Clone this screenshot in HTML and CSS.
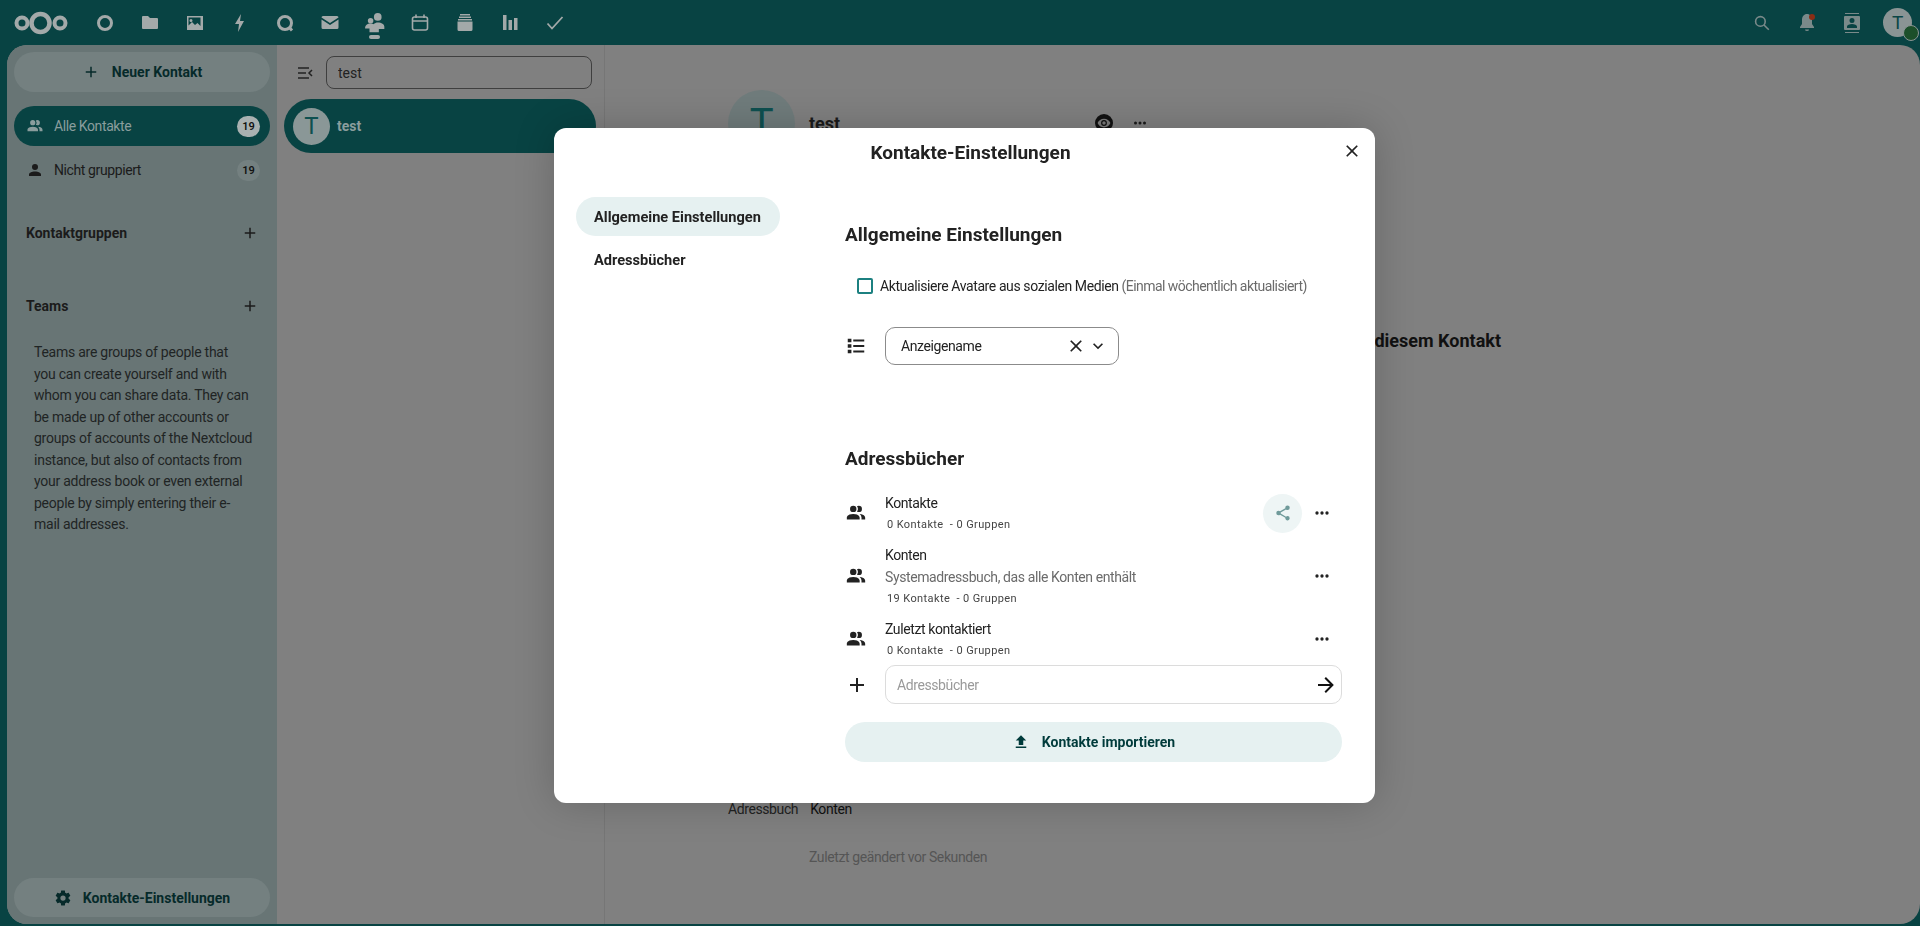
FILE: index.html
```html
<!DOCTYPE html>
<html lang="de">
<head>
  <meta charset="UTF-8">
  <meta name="viewport" content="width=device-width, initial-scale=1.0">
  <title>Kontakte</title>
  <link rel="stylesheet" href="styles.css">
</head>
<body>

<svg class="sprite" width="0" height="0">
  <symbol id="i-group" viewBox="0 0 24 24"><path d="M16 17V19H2V17S2 13 9 13 16 17 16 17M12.5 7.5A3.5 3.5 0 1 0 9 11A3.5 3.5 0 0 0 12.5 7.5M15.94 13A5.32 5.32 0 0 1 18 17V19H22V17S22 13.37 15.94 13M15 4A3.39 3.39 0 0 0 13.07 4.59A5 5 0 0 1 13.07 10.41A3.39 3.39 0 0 0 15 11A3.5 3.5 0 0 0 15 4Z"/></symbol>
  <symbol id="i-account" viewBox="0 0 24 24"><path d="M12,4A4,4 0 0,1 16,8A4,4 0 0,1 12,12A4,4 0 0,1 8,8A4,4 0 0,1 12,4M12,14C16.42,14 20,15.79 20,18V20H4V18C4,15.79 7.58,14 12,14Z"/></symbol>
  <symbol id="i-plus" viewBox="0 0 24 24"><path d="M19,13H13V19H11V13H5V11H11V5H13V11H19V13Z"/></symbol>
  <symbol id="i-close" viewBox="0 0 24 24"><path d="M19,6.41L17.59,5L12,10.59L6.41,5L5,6.41L10.59,12L5,17.59L6.41,19L12,13.41L17.59,19L19,17.59L13.41,12L19,6.41Z"/></symbol>
  <symbol id="i-chevron" viewBox="0 0 24 24"><path d="M7.41,8.58L12,13.17L16.59,8.58L18,10L12,16L6,10L7.41,8.58Z"/></symbol>
  <symbol id="i-arrow" viewBox="0 0 24 24"><path d="M4,11V13H16L10.5,18.5L11.92,19.92L19.84,12L11.92,4.08L10.5,5.5L16,11H4Z"/></symbol>
  <symbol id="i-share" viewBox="0 0 24 24"><path d="M18,16.08C17.24,16.08 16.56,16.38 16.04,16.85L8.91,12.7C8.96,12.47 9,12.24 9,12C9,11.76 8.96,11.53 8.91,11.3L15.96,7.19C16.5,7.69 17.21,8 18,8A3,3 0 0,0 21,5A3,3 0 0,0 18,2A3,3 0 0,0 15,5C15,5.24 15.04,5.47 15.09,5.7L8.04,9.81C7.5,9.31 6.79,9 6,9A3,3 0 0,0 3,12A3,3 0 0,0 6,15C6.79,15 7.5,14.69 8.04,14.19L15.16,18.34C15.11,18.55 15.08,18.77 15.08,19C15.08,20.61 16.39,21.91 18,21.91C19.61,21.91 20.92,20.61 20.92,19A2.92,2.92 0 0,0 18,16.08Z"/></symbol>
  <symbol id="i-dots" viewBox="0 0 24 24"><path d="M16,12A2,2 0 0,1 18,10A2,2 0 0,1 20,12A2,2 0 0,1 18,14A2,2 0 0,1 16,12M10,12A2,2 0 0,1 12,10A2,2 0 0,1 14,12A2,2 0 0,1 12,14A2,2 0 0,1 10,12M4,12A2,2 0 0,1 6,10A2,2 0 0,1 8,12A2,2 0 0,1 6,14A2,2 0 0,1 4,12Z"/></symbol>
  <symbol id="i-cog" viewBox="0 0 24 24"><path d="M12,15.5A3.5,3.5 0 0,1 8.5,12A3.5,3.5 0 0,1 12,8.5A3.5,3.5 0 0,1 15.5,12A3.5,3.5 0 0,1 12,15.5M19.43,12.97C19.47,12.65 19.5,12.33 19.5,12C19.5,11.67 19.47,11.34 19.43,11L21.54,9.37C21.73,9.22 21.78,8.95 21.66,8.73L19.66,5.27C19.54,5.05 19.27,4.96 19.05,5.05L16.56,6.05C16.04,5.66 15.5,5.32 14.87,5.07L14.5,2.42C14.46,2.18 14.25,2 14,2H10C9.75,2 9.54,2.18 9.5,2.42L9.13,5.07C8.5,5.32 7.96,5.66 7.44,6.05L4.95,5.05C4.73,4.96 4.46,5.05 4.34,5.27L2.34,8.73C2.21,8.95 2.27,9.22 2.46,9.37L4.57,11C4.53,11.34 4.5,11.67 4.5,12C4.5,12.33 4.53,12.65 4.57,12.97L2.46,14.63C2.27,14.78 2.21,15.05 2.34,15.27L4.34,18.73C4.46,18.95 4.73,19.03 4.95,18.95L7.44,17.94C7.96,18.34 8.5,18.68 9.13,18.93L9.5,21.58C9.54,21.82 9.75,22 10,22H14C14.25,22 14.46,21.82 14.5,21.58L14.87,18.93C15.5,18.67 16.04,18.34 16.56,17.94L19.05,18.95C19.27,19.03 19.54,18.95 19.66,18.73L21.66,15.27C21.78,15.05 21.73,14.78 21.54,14.63L19.43,12.97Z"/></symbol>
</svg>

<header class="topbar">
  <svg class="logo" width="54" height="28" viewBox="0 0 54 28" fill="none" stroke="currentColor">
    <circle cx="8" cy="14" r="5.5" stroke-width="4"/>
    <circle cx="26.5" cy="14" r="9" stroke-width="4.5"/>
    <circle cx="46" cy="14" r="5.5" stroke-width="4"/>
  </svg>
  <nav class="apps">
    <a class="app"><svg viewBox="0 0 20 20" width="20" height="20" fill="none" stroke="currentColor" stroke-width="3"><circle cx="10" cy="10" r="6.5"/></svg></a>
    <a class="app"><svg viewBox="0 0 20 20" width="20" height="20" fill="currentColor"><path d="M3 3h5l2 2h7a1 1 0 0 1 1 1v9a1 1 0 0 1-1 1H3a1 1 0 0 1-1-1V4a1 1 0 0 1 1-1z"/></svg></a>
    <a class="app"><svg viewBox="0 0 20 20" width="20" height="20" fill="currentColor" fill-rule="evenodd"><path d="M2 3h16v14H2zM3.5 4.5v8l3.5-3.5 3 3 2.5-2 3 3v-8.5zM6 6a1.5 1.5 0 1 1 0 3 1.5 1.5 0 0 1 0-3z"/></svg></a>
    <a class="app"><svg viewBox="0 0 20 20" width="20" height="20" fill="currentColor"><path d="M11 1 5 11h4l-1 8 6-11h-4z"/></svg></a>
    <a class="app"><svg viewBox="0 0 20 20" width="20" height="20" fill="none" stroke="currentColor" stroke-width="3"><circle cx="10" cy="10" r="6.5"/><path d="M14 14l3 3.5"/></svg></a>
    <a class="app"><svg viewBox="0 0 20 20" width="20" height="20" fill="currentColor"><path d="M3 3h14a1.5 1.5 0 0 1 1.5 1.5L10 10 1.5 4.5A1.5 1.5 0 0 1 3 3zM1.5 6.5 10 12l8.5-5.5v8A1.5 1.5 0 0 1 17 16H3a1.5 1.5 0 0 1-1.5-1.5z"/></svg></a>
    <a class="app app-active"><svg viewBox="0 0 20 20" width="22" height="22" fill="currentColor"><circle cx="12.5" cy="4.5" r="3.5"/><circle cx="6" cy="8" r="2.5"/><path d="M1 15c0-3 2-4.5 5-4.5 1 0 2 .2 2.5.6C10 10 11 9.500 12.500 9.500c3.500 0 6 1.500 6 4v2h-5v3H5v-3.500H1z"/></svg></a>
    <a class="app"><svg viewBox="0 0 20 20" width="20" height="20" fill="none" stroke="currentColor" stroke-width="1.6"><rect x="2.5" y="4" width="15" height="13" rx="2"/><path d="M2.5 8h15M6 1.5V5M14 1.5V5"/></svg></a>
    <a class="app"><svg viewBox="0 0 20 20" width="20" height="20" fill="currentColor"><path d="M5 1h10v1.5H5zM4 3.5h12V5H4zM3 6h14v1.5H3zM2.5 8.5h15v8a1.5 1.5 0 0 1-1.5 1.500H4a1.500 1.500 0 0 1-1.500-1.500z"/></svg></a>
    <a class="app"><svg viewBox="0 0 20 20" width="20" height="20" fill="currentColor"><path d="M3 2h3.5v15H3zM8.5 7H12v10H8.5zM14 5h3.5v12H14z"/></svg></a>
    <a class="app"><svg viewBox="0 0 20 20" width="20" height="20" fill="none" stroke="currentColor" stroke-width="1.8"><path d="M2.5 10.5 7 15.5 17.5 4"/></svg></a>
  </nav>
  <div class="top-right">
    <a class="app dim"><svg viewBox="0 0 20 20" width="16" height="16" fill="none" stroke="currentColor" stroke-width="2"><circle cx="8" cy="8" r="6"/><path d="M12.5 12.5l6 6"/></svg></a>
    <a class="app dim bell"><svg viewBox="0 0 20 20" width="20" height="20" fill="currentColor"><path d="M10 1c-3 0-5 2.5-5 6v4l-2 3v1h14v-1l-2-3V7c0-3.5-2-6-5-6zM8 16.5h4a2 1.5 0 0 1-4 0z"/></svg><span class="bell-dot"></span></a>
    <a class="app dim"><svg viewBox="0 0 20 20" width="20" height="20" fill="currentColor" fill-rule="evenodd"><path d="M3 0h14v1H3zM3 19h14v1H3zM3 3h14a1 1 0 0 1 1 1v12a1 1 0 0 1-1 1H3a1 1 0 0 1-1-1V4a1 1 0 0 1 1-1zm7 2a2.5 2.5 0 1 0 0 5 2.5 2.5 0 0 0 0-5zm-5 10h10v-1.5c0-1.5-2.5-2.5-5-2.5s-5 1-5 2.5z"/></svg></a>
    <div class="user"><span>T</span><i class="user-status"></i></div>
  </div>
</header>

<main class="content">
  <aside class="sidebar">
    <button class="new-contact"><svg class="ic18"><use href="#i-plus"/></svg>Neuer Kontakt</button>
    <ul class="groups">
      <li class="group group-active"><svg class="ic18"><use href="#i-group"/></svg><span>Alle Kontakte</span><b class="count">19</b></li>
      <li class="group"><svg class="ic18"><use href="#i-account"/></svg><span>Nicht gruppiert</span><b class="count">19</b></li>
    </ul>
    <div class="side-head side-head-first"><span>Kontaktgruppen</span><svg class="ic18"><use href="#i-plus"/></svg></div>
    <div class="side-head side-head-teams"><span>Teams</span><svg class="ic18"><use href="#i-plus"/></svg></div>
    <p class="teams-info">Teams are groups of people that<br>you can create yourself and with<br>whom you can share data. They can<br>be made up of other accounts or<br>groups of accounts of the Nextcloud<br>instance, but also of contacts from<br>your address book or even external<br>people by simply entering their e-<br>mail addresses.</p>
    <button class="side-settings"><svg class="ic18"><use href="#i-cog"/></svg>Kontakte-Einstellungen</button>
  </aside>

  <section class="list">
    <div class="list-top">
      <svg class="collapse" width="16" height="16" viewBox="0 0 16 16" fill="none" stroke="currentColor" stroke-width="1.5"><path d="M1 3h11M1 8h8M1 13h11M15 5l-3 3 3 3"/></svg>
      <input class="search" value="test">
    </div>
    <div class="list-item"><span class="avatar">T</span><b>test</b></div>
  </section>

  <section class="detail">
    <div class="detail-head">
      <span class="detail-avatar">T</span>
      <strong>test</strong>
      <span class="eye"><svg width="14" height="14" viewBox="0 0 24 24" fill="#7d7d7d"><path d="M12 9a3 3 0 1 0 0 6 3 3 0 0 0 0-6zm0-4.5C7 4.5 2.700 7.600 1 12c1.700 4.400 6 7.500 11 7.500s9.300-3.100 11-7.500c-1.700-4.400-6-7.500-11-7.500zM12 17a5 5 0 1 1 0-10 5 5 0 0 1 0 10z"/></svg></span>
      <svg class="ic18 detail-dots"><use href="#i-dots"/></svg>
    </div>
    <h3 class="detail-empty">Keine Details zu diesem Kontakt</h3>
    <div class="detail-line"><span>Adressbuch</span><span class="value">Konten</span></div>
    <p class="detail-mod">Zuletzt geändert vor Sekunden</p>
  </section>
</main>

<div class="modal">
  <div class="modal-title">Kontakte-Einstellungen<svg class="ic20 modal-close"><use href="#i-close"/></svg></div>
  <div class="modal-body">
    <ul class="modal-nav">
      <li class="modal-nav-item modal-nav-active">Allgemeine Einstellungen</li>
      <li class="modal-nav-item">Adressbücher</li>
    </ul>
    <div class="modal-content">
      <h2>Allgemeine Einstellungen</h2>
      <label class="check-row"><span class="check"></span><span>Aktualisiere Avatare aus sozialen Medien <em>(Einmal wöchentlich aktualisiert)</em></span></label>
      <div class="sort-row">
        <svg class="row-icon" viewBox="0 0 24 24"><path d="M3,4H7V8H3V4M9,5V7H21V5H9M3,10H7V14H3V10M9,11V13H21V11H9M3,16H7V20H3V16M9,17V19H21V17H9"/></svg>
        <div class="select"><span>Anzeigename</span><svg class="ic20"><use href="#i-close"/></svg><svg class="ic20"><use href="#i-chevron"/></svg></div>
      </div>

      <h2 class="books-head">Adressbücher</h2>
      <div class="book">
        <svg class="row-icon"><use href="#i-group"/></svg>
        <div class="book-text"><div>Kontakte</div><small>0 Kontakte &nbsp;- 0 Gruppen</small></div>
        <span class="share"><svg class="ic18"><use href="#i-share"/></svg></span>
        <svg class="ic20 book-dots"><use href="#i-dots"/></svg>
      </div>
      <div class="book">
        <svg class="row-icon"><use href="#i-group"/></svg>
        <div class="book-text"><div>Konten</div><div class="book-desc">Systemadressbuch, das alle Konten enthält</div><small>19 Kontakte &nbsp;- 0 Gruppen</small></div>
        <svg class="ic20 book-dots"><use href="#i-dots"/></svg>
      </div>
      <div class="book">
        <svg class="row-icon"><use href="#i-group"/></svg>
        <div class="book-text"><div>Zuletzt kontaktiert</div><small>0 Kontakte &nbsp;- 0 Gruppen</small></div>
        <svg class="ic20 book-dots"><use href="#i-dots"/></svg>
      </div>
      <div class="add-row">
        <svg class="ic24 row-icon"><use href="#i-plus"/></svg>
        <div class="add-input"><span>Adressbücher</span><svg class="ic24"><use href="#i-arrow"/></svg></div>
      </div>
      <button class="import"><svg class="ic18" viewBox="0 0 24 24"><path d="M9,16V10H5L12,3L19,10H15V16H9M5,20V18H19V20H5Z"/></svg>Kontakte importieren</button>
    </div>
  </div>
</div>

</body>
</html>
```

FILE: styles.css
```css
* {
  box-sizing: border-box;
}
html, body {
  height: 100%;
}
body {
  margin: 0;
  display: flex;
  flex-direction: column;
  overflow: hidden;
  background: #084343;
  color: #1b1b1b;
  font-family: Roboto, "Noto Sans", sans-serif;
  font-size: 14px;
  letter-spacing: -.4px;
}
button {
  font-family: inherit;
  border: 0;
}
ul {
  list-style: none;
  margin: 0;
  padding: 0;
}
svg {
  flex-shrink: 0;
}
.sprite {
  position: absolute;
}
.ic18, .ic20, .ic24, .row-icon {
  fill: currentColor;
}
.ic18 { width: 18px; height: 18px; }
.ic20 { width: 20px; height: 20px; }
.ic24 { width: 24px; height: 24px; }

/* top bar */
.topbar {
  height: 45px;
  flex-shrink: 0;
  display: flex;
  align-items: center;
  padding-left: 14px;
  color: #a3a9a9;
}
.logo {
  margin-right: 14px;
}
.apps {
  display: flex;
}
.app {
  width: 45px;
  height: 45px;
  display: flex;
  align-items: center;
  justify-content: center;
  position: relative;
}
.app-active::after {
  content: "";
  position: absolute;
  left: 17px;
  bottom: 6px;
  width: 11px;
  height: 4px;
  border-radius: 2px;
  background: #a3a9a9;
}
.top-right {
  margin-left: auto;
  display: flex;
  align-items: center;
  padding-right: 8px;
}
.dim {
  color: #7a8a8a;
}
.bell-dot {
  position: absolute;
  top: 14px;
  left: 25px;
  width: 6px;
  height: 6px;
  border-radius: 50%;
  background: #8a2d15;
}
.user {
  width: 29px;
  height: 29px;
  margin-left: 9px;
  border-radius: 50%;
  background: #8a9494;
  color: #0b4646;
  font-size: 19px;
  line-height: 29px;
  text-align: center;
  position: relative;
}
.user-status {
  position: absolute;
  right: -7px;
  bottom: -4px;
  width: 16px;
  height: 16px;
  border-radius: 50%;
  background: #1c4f2a;
  border: 1px solid #8a9494;
}

/* app content behind the dialog */
.content {
  flex: 1;
  min-height: 0;
  display: flex;
  margin: 0 0 2px 7px;
  border-radius: 20px;
  overflow: hidden;
  background: #808080;
}
.sidebar {
  width: 270px;
  flex-shrink: 0;
  display: flex;
  flex-direction: column;
  padding: 7px;
  background: #687575;
}
.new-contact {
  height: 40px;
  display: flex;
  align-items: center;
  justify-content: center;
  gap: 12px;
  border-radius: 20px;
  background: #748080;
  color: #062a2a;
  font-size: 14px;
  font-weight: 700;
  letter-spacing: 0;
}
.groups {
  margin-top: 14px;
}
.group {
  height: 40px;
  margin-bottom: 4px;
  display: flex;
  align-items: center;
  padding: 0 10px 0 12px;
  border-radius: 20px;
}
.group span {
  margin-left: 10px;
  flex: 1;
}
.group-active {
  background: #084343;
  color: #8a9d9d;
}
.count {
  min-width: 23px;
  height: 21px;
  border-radius: 11px;
  background: #748080;
  color: #111;
  font-size: 11px;
  font-weight: 600;
  letter-spacing: 0;
  line-height: 21px;
  text-align: center;
}
.group-active .count {
  background: #a9b1b1;
}
.side-head {
  display: flex;
  justify-content: space-between;
  align-items: center;
  padding: 0 11px 0 12px;
  font-weight: 700;
  letter-spacing: 0;
  height: 24px;
}
.side-head-first {
  margin-top: 27px;
}
.side-head-teams {
  margin-top: 49px;
}
.teams-info {
  margin: 24px 0 0 20px;
  font-size: 14px;
  line-height: 21.5px;
  letter-spacing: -.25px;
  color: #1f2424;
}
.side-settings {
  margin-top: auto;
  height: 39px;
  display: flex;
  align-items: center;
  justify-content: center;
  gap: 11px;
  border-radius: 20px;
  background: #748080;
  color: #062a2a;
  font-size: 14px;
  font-weight: 700;
  letter-spacing: 0;
}
.list {
  width: 328px;
  flex-shrink: 0;
  padding: 11px 8px 0 7px;
  border-right: 1px solid #767676;
}
.list-top {
  display: flex;
  align-items: center;
  gap: 13px;
  padding-left: 13px;
}
.collapse {
  color: #222;
}
.search {
  width: 266px;
  height: 33px;
  padding: 0 11px;
  border: 1px solid #3f3f3f;
  border-radius: 8px;
  background: #808080;
  color: #222;
  font-family: inherit;
  font-size: 14px;
}
.list-item {
  height: 54px;
  margin-top: 10px;
  display: flex;
  align-items: center;
  gap: 7px;
  padding-left: 9px;
  border-radius: 27px;
  background: #084343;
  color: #8a9d9d;
  letter-spacing: 0;
}
.avatar {
  width: 37px;
  height: 37px;
  border-radius: 50%;
  background: #8a9797;
  color: #0e5050;
  font-size: 24px;
  line-height: 37px;
  text-align: center;
}
.detail {
  flex: 1;
  padding: 45px 0 0 123px;
}
.detail-head {
  display: flex;
  align-items: center;
  height: 66px;
}
.detail-avatar {
  width: 67px;
  height: 67px;
  border-radius: 50%;
  background: #707c7c;
  color: #0e5050;
  font-size: 40px;
  line-height: 67px;
  text-align: center;
}
.detail-head strong {
  margin: 0 0 0 14px;
  font-size: 18px;
  letter-spacing: 0;
  width: 286px;
}
.eye {
  width: 18px;
  height: 18px;
  border-radius: 50%;
  background: #111;
  display: flex;
  align-items: center;
  justify-content: center;
}
.detail-dots {
  margin-left: 18px;
}
.detail-empty {
  margin: 174px 0 0;
  width: 773px;
  text-align: right;
  font-size: 18px;
  letter-spacing: 0;
  color: #111;
}
.detail-line {
  margin-top: 450px;
  display: flex;
  gap: 12px;
  color: #222;
}
.detail-line .value {
  color: #111;
}
.detail-mod {
  margin: 32px 0 0 81px;
  color: #555;
}

/* dialog */
.modal {
  position: fixed;
  left: 554px;
  top: 128px;
  width: 821px;
  height: 675px;
  border-radius: 12px;
  background: #fff;
  box-shadow: 0 0 40px rgba(0, 0, 0, .2);
  color: #222;
}
.modal-title {
  height: 48px;
  padding-left: 12px;
  position: relative;
  text-align: center;
  font-size: 19px;
  font-weight: 700;
  letter-spacing: 0;
  line-height: 49px;
}
.modal-close {
  position: absolute;
  right: 13px;
  top: 13px;
}
.modal-body {
  display: flex;
}
.modal-nav {
  width: 204px;
  margin: 21px 0 0 22px;
  flex-shrink: 0;
}
.modal-nav-item {
  height: 39px;
  padding: 0 18px;
  border-radius: 20px;
  font-weight: 700;
  font-size: 14.6px;
  letter-spacing: 0;
  line-height: 41px;
  white-space: nowrap;
  margin-bottom: 4px;
}
.modal-nav-active {
  background: #e6f1f1;
}
.modal-content {
  width: 497px;
  margin-left: 65px;
  padding-top: 44px;
}
h2 {
  margin: 0;
  font-size: 19px;
  line-height: 30px;
  font-weight: 700;
  letter-spacing: 0;
}
.check-row {
  margin-top: 24px;
  height: 24px;
  display: flex;
  align-items: center;
  padding-left: 12px;
  gap: 7px;
  font-size: 14px;
  white-space: nowrap;
}
.check {
  width: 16px;
  height: 16px;
  border: 2px solid #1c8080;
  border-radius: 2px;
}
.check-row em {
  font-style: normal;
  letter-spacing: -.55px;
  color: #6b6b6b;
}
.sort-row {
  margin-top: 29px;
  display: flex;
  align-items: center;
}
.row-icon {
  width: 22px;
  height: 22px;
  margin: 0 18px 0 0;
}
.select {
  width: 234px;
  height: 38px;
  display: flex;
  align-items: center;
  padding: 0 10px 0 15px;
  border: 1px solid #8b8b8b;
  border-radius: 10px;
  font-size: 14px;
}
.select span {
  flex: 1;
}
.select svg {
  margin-left: 2px;
}
.books-head {
  margin-top: 79px;
  margin-bottom: 18px;
}
.book {
  min-height: 44px;
  margin-bottom: 8px;
  display: flex;
  align-items: center;
  font-size: 14px;
  line-height: 22px;
}
.book > svg, .share {
  margin-bottom: 2px;
}
.book-text {
  flex: 1;
}
.book small {
  display: block;
  font-size: 11px;
  padding-left: 2px;
  color: #444;
  letter-spacing: .4px;
}
.book-desc {
  color: #6b6b6b;
}
.share {
  width: 39px;
  height: 39px;
  margin-right: 10px;
  border-radius: 50%;
  background: #eef5f5;
  color: #6f9a9a;
  display: flex;
  align-items: center;
  justify-content: center;
}
.book-dots {
  margin-right: 10px;
}
.add-row {
  margin-top: -5px;
  display: flex;
  align-items: center;
}
.add-row .row-icon {
  margin: 0 15px 0 0;
  width: 24px;
  height: 24px;
}
.add-input {
  width: 457px;
  height: 39px;
  margin-left: 1px;
  display: flex;
  align-items: center;
  justify-content: space-between;
  padding: 0 3px 0 11px;
  border: 1px solid #dcdcdc;
  border-radius: 10px;
  color: #9a9a9a;
  font-size: 14px;
}
.add-input svg {
  color: #111;
}
.import {
  width: 497px;
  height: 40px;
  margin-top: 18px;
  display: flex;
  align-items: center;
  justify-content: center;
  gap: 12px;
  border-radius: 20px;
  background: #e6f1f1;
  color: #003b3b;
  font-size: 14px;
  font-weight: 700;
  letter-spacing: 0;
}
```
